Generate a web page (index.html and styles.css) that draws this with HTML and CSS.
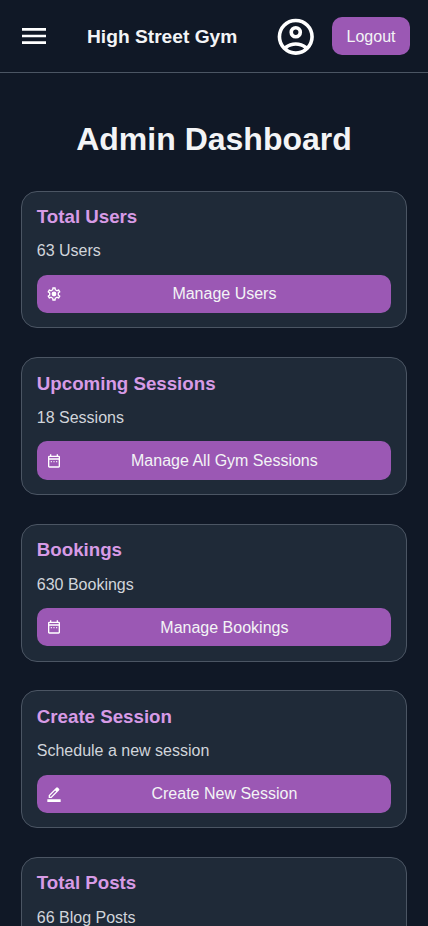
FILE: index.html
```
<!DOCTYPE html>
<html lang="en">
<head>
<meta charset="utf-8">
<meta name="viewport" content="width=device-width, initial-scale=1">
<title>High Street Gym</title>
<link rel="stylesheet" href="styles.css">
</head>
<body>
<svg class="sprite" aria-hidden="true">
  <symbol id="gear" viewBox="0 0 24 24"><path d="M19.43 12.98c.04-.32.07-.64.07-.98s-.03-.66-.07-.98l2.11-1.65c.19-.15.24-.42.12-.64l-2-3.46a.5.5 0 0 0-.61-.22l-2.49 1c-.52-.4-1.08-.73-1.69-.98l-.38-2.65A.49.49 0 0 0 14 2h-4c-.25 0-.46.18-.49.42l-.38 2.65c-.61.25-1.17.59-1.69.98l-2.49-1a.5.5 0 0 0-.61.22l-2 3.46c-.13.22-.07.49.12.64l2.11 1.65c-.04.32-.07.65-.07.98s.03.66.07.98l-2.11 1.65c-.19.15-.24.42-.12.64l2 3.46c.12.22.39.3.61.22l2.49-1c.52.4 1.08.73 1.69.98l.38 2.65c.03.24.24.42.49.42h4c.25 0 .46-.18.49-.42l.38-2.65c.61-.25 1.17-.59 1.69-.98l2.49 1c.23.09.49 0 .61-.22l2-3.46a.5.5 0 0 0-.12-.64zm-1.98-1.71c.04.31.05.52.05.73s-.02.43-.05.73l-.14 1.13.89.7 1.08.84-.7 1.21-1.27-.51-1.04-.42-.9.68c-.43.32-.84.56-1.25.73l-1.06.43-.16 1.13-.2 1.35h-1.4l-.35-2.48-1.06-.43c-.43-.18-.83-.41-1.23-.71l-.91-.7-1.06.43-1.27.51-.7-1.21 1.97-1.54-.14-1.13c-.03-.31-.05-.54-.05-.74s.02-.43.05-.73l.14-1.13-1.97-1.54.7-1.21 1.27.51 1.04.42.9-.68c.43-.32.84-.56 1.25-.73l1.06-.43.36-2.48h1.39l.35 2.48 1.06.43c.43.18.83.41 1.23.71l.91.7 1.06-.43 1.27-.51.7 1.21-1.96 1.54z"/><circle cx="12" cy="12" r="3.6"/></symbol>
  <symbol id="calendar" viewBox="0 -960 960 960"><path d="M200-80q-33 0-56.500-23.500T120-160v-560q0-33 23.500-56.500T200-800h40v-80h80v80h320v-80h80v80h40q33 0 56.500 23.500T840-720v560q0 33-23.500 56.500T760-80H200Zm0-80h560v-400H200v400Zm0-480h560v-80H200v80Zm280 240q-17 0-28.500-11.500T440-440q0-17 11.500-28.500T480-480q17 0 28.500 11.500T520-440q0 17-11.500 28.500T480-400Zm-160 0q-17 0-28.500-11.500T280-440q0-17 11.500-28.500T320-480q17 0 28.500 11.500T360-440q0 17-11.500 28.500T320-400Zm320 0q-17 0-28.500-11.500T600-440q0-17 11.500-28.500T640-480q17 0 28.500 11.500T680-440q0 17-11.500 28.500T640-400Z"/></symbol>
  <symbol id="pen" viewBox="0 -960 960 960"><path d="M80 0v-160h800V0H80Zm160-320h56l312-311-29-29-28-28-311 312v56Zm-80 80v-170l448-447q11-11 25.500-17t30.500-6q16 0 31 6t27 18l55 56q12 11 17.500 26t5.500 31q0 15-5.500 29.500T777-687L330-240H160Zm560-504-56-56 56 56ZM608-631l-29-29-28-28 57 57Z"/></symbol>
</svg>
<header class="topbar">
  <svg class="menu" viewBox="0 0 24 24"><path d="M3 18h18v-2H3v2zm0-5h18v-2H3v2zm0-7v2h18V6H3z"/></svg>
  <div class="brand">High Street Gym</div>
  <svg class="account" viewBox="0 -960 960 960"><path d="M234-276q51-39 114-61.500T480-360q69 0 132 22.500T726-276q35-41 54.500-93T800-480q0-133-93.500-226.500T480-800q-133 0-226.500 93.500T160-480q0 59 19.500 111t54.500 93Zm246-164q-59 0-99.500-40.500T340-580q0-59 40.500-99.500T480-720q59 0 99.500 40.500T620-580q0 59-40.500 99.500T480-440Zm0 360q-83 0-156-31.500T197-197q-54-54-85.500-127T80-480q0-83 31.500-156T197-763q54-54 127-85.500T480-880q83 0 156 31.500T763-763q54 54 85.500 127T880-480q0 83-31.500 156T763-197q-54 54-127 85.500T480-80Zm0-80q53 0 100-15.500t86-44.500q-39-29-86-44.500T480-280q-53 0-100 15.500T294-220q39 29 86 44.500T480-160Zm0-360q26 0 43-17t17-43q0-26-17-43t-43-17q-26 0-43 17t-17 43q0 26 17 43t43 17Z"/></svg>
  <button class="logout">Logout</button>
</header>
<main class="dashboard">
  <h1>Admin Dashboard</h1>
  <section class="card">
    <h2>Total Users</h2>
    <p>63 Users</p>
    <button class="action"><svg><use href="#gear"/></svg><span>Manage Users</span></button>
  </section>
  <section class="card">
    <h2>Upcoming Sessions</h2>
    <p>18 Sessions</p>
    <button class="action"><svg><use href="#calendar"/></svg><span>Manage All Gym Sessions</span></button>
  </section>
  <section class="card">
    <h2>Bookings</h2>
    <p>630 Bookings</p>
    <button class="action"><svg><use href="#calendar"/></svg><span>Manage Bookings</span></button>
  </section>
  <section class="card">
    <h2>Create Session</h2>
    <p>Schedule a new session</p>
    <button class="action"><svg><use href="#pen"/></svg><span>Create New Session</span></button>
  </section>
  <section class="card">
    <h2>Total Posts</h2>
    <p>66 Blog Posts</p>
  </section>
</main>
</body>
</html>
```
FILE: styles.css
```
* { box-sizing: border-box; }
body {
  margin: 0;
  height: 926px;
  overflow: hidden;
  background: #101826;
  color: #f3f4f6;
  font: 16px/18.4px "Liberation Sans", Arial, sans-serif;
}
.sprite { display: none; }
svg { fill: #fff; flex: none; }
button {
  border: 0;
  background: #9b58b4;
  color: #f3f4f6;
  font: inherit;
  border-radius: 10px;
  height: 38.4px;
}
.topbar {
  display: flex;
  align-items: center;
  height: 73px;
  padding: 0 18px;
  border-bottom: 1px solid #4b5563;
}
.menu { width: 32px; height: 32px; }
.brand { margin-left: 37px; padding-top: 2px; width: 151px; font-size: 19.2px; font-weight: bold; line-height: 22px; white-space: nowrap; }
.account { width: 43.5px; height: 43.5px; margin: 0.6px 0 0 35.7px; }
.logout { width: 78px; margin-left: auto; padding: 2.4px 0 0; }
.dashboard {
  display: flex;
  flex-direction: column;
  align-items: center;
  gap: 28.91px;
  padding-top: 48px;
}
h1 { margin: 0 0 4.1px; font-size: 32px; line-height: 36.8px; }
.card {
  flex: none;
  width: 385.2px;
  height: 137.65px;
  padding: 14.4px;
  display: flex;
  flex-direction: column;
  background: #1f2a38;
  border: 1px solid #4b5563;
  border-radius: 16px;
}
.card h2 { margin: 0; font-size: 18.72px; line-height: 21px; color: #d79be6; }
.card p { margin: 15.25px 0 14.09px; color: #d1d5db; }
.action { display: flex; align-items: center; gap: 4.8px; width: 100%; flex: none; padding: 0 9.6px; }
.action svg { width: 16px; height: 16px; }
.action span { flex: 1; text-align: center; padding-top: 1.1px; }
```
